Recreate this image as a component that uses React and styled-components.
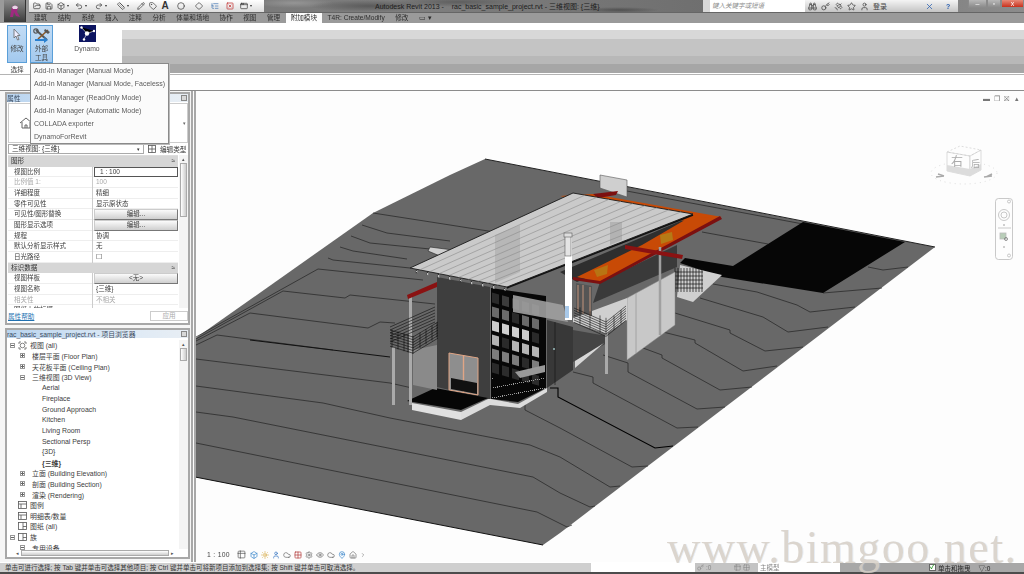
import React from "react";
import styled, { createGlobalStyle } from "styled-components";
import {
  FolderOpen, Save, Box, Undo2, Redo2, Ruler, Pencil, Tag, Circle, Diamond, ListTree, SquareX, AppWindow,
  Binoculars, Key, Satellite, Star, User, X as XIcon, Table2, Sun, Eye, Cloud, Grid2x2, House, MapPin, Settings, ChevronRight,
} from "lucide-react";

const FONT = `"Liberation Sans", "Noto Sans CJK SC", sans-serif`;

const GlobalStyle = createGlobalStyle`
  html, body { margin: 0; padding: 0; background: #fff; overflow: hidden; }
  #root { width: 1024px; height: 574px; }
  * { box-sizing: border-box; }
`;

const Page = styled.div`
  position: relative;
  width: 1024px;
  height: 574px;
  display: flex;
  flex-direction: column;
  overflow: hidden;
  font-family: ${FONT};
  font-size: 7px;
  color: #333;
  filter: blur(0.35px);
`;

/* ---------- title bar + tabs ---------- */
const Header = styled.header`
  display: grid;
  grid-template-columns: 29px 1fr;
  grid-template-rows: 13px 10px;
  background: #9a9a9a;
`;
const AppButton = styled.div`
  grid-row: 1 / 3;
  margin: 0 3px 1px 4px;
  background: linear-gradient(180deg, #8a8a8a, #3c3c3c);
  border-right: 1px solid #333;
  display: flex;
  align-items: center;
  justify-content: center;
`;
const TitleBar = styled.div`
  display: flex;
  align-items: center;
  height: 13px;
  background:
    radial-gradient(ellipse 60px 6px at 340px 6px, #5a5a5a, transparent),
    radial-gradient(ellipse 40px 5px at 265px 3px, #959595, transparent),
    radial-gradient(ellipse 40px 3px at 590px 10px, #505050, transparent),
    radial-gradient(ellipse 70px 5px at 430px 2px, #5e5e5e, transparent),
    linear-gradient(90deg, #747474, #7e7e7e 40%, #6e6e6e 70%, #8c8c8c);
  border-bottom: 1px solid #666;
`;
const Qat = styled.div`
  width: 235px;
  height: 12px;
  margin-top: -1px;
  background: linear-gradient(180deg, #fff, #dcdcdc);
  display: flex;
  align-items: center;
  color: #333;
  padding-left: 2px;
`;
const QatSlot = styled.span`
  width: ${(p) => p.$w}px;
  display: flex;
  align-items: center;
  justify-content: center;
  font-weight: bold;
  font-size: ${(p) => (p.$big ? 10 : 7)}px;
  ${(p) => p.$caret && `
    &::after {
      content: "";
      margin-left: 2px;
      border: 1.5px solid transparent;
      border-top: 2px solid #333;
      border-bottom: 0;
    }
  `}
`;
const WindowTitle = styled.div`
  margin-left: 111px;
  width: 328px;
  font-size: 7px;
  color: #1c1c1c;
  white-space: pre;
`;
const Search = styled.div`
  width: 102px;
  height: 12px;
  background: #fff;
  border-left: 7px solid #d8d8d8;
  padding-left: 2px;
  font-size: 6.5px;
  font-style: italic;
  color: #8a8a8a;
  line-height: 12px;
`;
const HelpTools = styled.div`
  width: 153px;
  height: 12px;
  background: linear-gradient(180deg, #f4f4f4, #c4c4c4);
  display: flex;
  align-items: center;
  gap: 4px;
  padding-left: 3px;
  color: #444;
  font-size: 7px;
`;
const WinButtons = styled.div`
  flex: 1;
  display: flex;
  justify-content: flex-end;
  align-items: flex-start;
  height: 13px;
`;
const WinButton = styled.span`
  width: ${(p) => p.$w}px;
  height: 8px;
  display: flex;
  justify-content: center;
  align-items: center;
  color: #fff;
  font-size: 7px;
  border: 1px solid #8a8a8a;
  border-top: 0;
  background: ${(p) => (p.$close ? "linear-gradient(180deg,#e88a78,#c8301c)" : "linear-gradient(180deg,#b8b8b8,#8c8c8c)")};
`;
const TabBar = styled.nav`
  display: flex;
  align-items: center;
  gap: 10.5px;
  height: 10px;
  padding-left: 5px;
  background: #9a9a9a;
`;
const Tab = styled.span`
  font-size: 6.6px;
  line-height: 10px;
  color: #2c2c2c;
  white-space: nowrap;
  ${(p) => p.$active && `
    background: #fdfdfd;
    margin: 0 -5px;
    padding: 0 5px;
    height: 10px;
  `}
`;

/* ---------- ribbon ---------- */
const Ribbon = styled.section`
  display: flex;
  height: 51px;
  background: #fff;
`;
const RibbonTools = styled.div`
  width: 122px;
  padding: 2px 0 0 7px;
  display: grid;
  grid-template-columns: 20px 23px 1fr;
  column-gap: 3px;
  grid-template-rows: 38px 1fr;
`;
const RibbonButton = styled.div`
  background: linear-gradient(180deg, #c2dcf5, #a3c9ee);
  border: 1px solid #5a9fd8;
  display: flex;
  flex-direction: column;
  align-items: center;
  text-align: center;
  padding-top: 2px;
  font-size: 6.6px;
  line-height: 8.5px;
  color: #444;
`;
const DynamoButton = styled.div`
  display: flex;
  flex-direction: column;
  align-items: center;
  gap: 3px;
  padding-left: 2px;
  color: #555;
  font-size: 6.8px;
  width: 60px;
`;
const GroupLabel = styled.div`
  grid-column: 1 / 2;
  text-align: center;
  font-size: 6.6px;
  padding-top: 1px;
  color: #444;
`;
const RibbonBands = styled.div`
  flex: 1;
  background: linear-gradient(
    180deg,
    #fff 0 7px,
    #d8d8d8 7px 16px,
    #c4c4c4 16px 33px,
    #b8b8b8 33px 41px,
    #a6a6a6 41px 50px,
    #fff 50px
  );
`;
const OptionsBar = styled.div`
  height: 17px;
  background: #fff;
  border-top: 1px solid #b4b4b4;
  border-bottom: 1px solid #8c8c8c;
`;

/* ---------- add-in menu ---------- */
const Menu = styled.ul`
  position: absolute;
  left: 30px;
  top: 63px;
  width: 139px;
  height: 81px;
  margin: 0;
  padding: 0 0 0 3px;
  list-style: none;
  background: #fbfbfb;
  border: 1px solid #8a8a8a;
  box-shadow: 1px 1px 0 #bbb;
  z-index: 5;
`;
const MenuItem = styled.li`
  height: 13.3px;
  line-height: 13.3px;
  font-size: 7px;
  color: #5c5c5c;
  white-space: nowrap;
`;

/* ---------- body ---------- */
const Main = styled.main`
  flex: 1;
  display: flex;
  min-height: 0;
`;
const Sidebar = styled.aside`
  width: 191px;
  padding: 1px 1px 0 5px;
  display: flex;
  flex-direction: column;
  gap: 3px;
  background: #f6f6f6;
`;
const Panel = styled.div`
  height: ${(p) => p.$h}px;
  background: #fff;
  border: 2px solid #a8a8a8;
  display: flex;
  flex-direction: column;
  overflow: hidden;
`;
const PanelHead = styled.div`
  height: 8px;
  flex: none;
  display: flex;
  align-items: center;
  justify-content: space-between;
  padding: 0 1px 0 0;
  background: linear-gradient(90deg, #b9d4ef, #dce9f6 60%, #e8eef4);
  font-size: 6.8px;
  color: #3c4c60;
  white-space: nowrap;
`;
const PanelClose = styled.span`
  width: 6px;
  height: 6px;
  border: 1px solid #888;
  background: #d8d8d8;
`;
const TypeArea = styled.div`
  height: 40px;
  flex: none;
  margin: 1px 0 0 1px;
  border: 1px solid #ccc;
  display: flex;
  align-items: center;
  padding-left: 10px;
  justify-content: space-between;
  color: #666;
`;
const TypeRow = styled.div`
  height: 12px;
  flex: none;
  display: flex;
  align-items: center;
  padding-left: 1px;
  gap: 4px;
  font-size: 6.6px;
`;
const TypeSelect = styled.div`
  width: 136px;
  height: 10px;
  padding: 0 3px;
  border: 1px solid #aaa;
  display: flex;
  justify-content: space-between;
  align-items: center;
  line-height: 8px;
`;
const EditType = styled.span`
  display: flex;
  align-items: center;
  gap: 4px;
`;
const TableWrap = styled.div`
  flex: 1;
  min-height: 0;
  display: flex;
  overflow: hidden;
`;
const PropTable = styled.div`
  width: 173px;
  margin-left: 1px;
  border-top: 1px solid #ddd;
`;
const SectionRow = styled.div`
  height: 10.67px;
  line-height: 10.67px;
  background: #d6d6d6;
  padding: 0 3px;
  font-size: 6.6px;
  display: flex;
  justify-content: space-between;
`;
const PropRow = styled.div`
  height: 10.67px;
  display: grid;
  grid-template-columns: 85px 1fr;
  font-size: 6.5px;
  line-height: 10.67px;
  color: ${(p) => (p.$muted ? "#a8a8a8" : "#3c3c3c")};
  border-bottom: 1px solid #eee;
`;
const PropLabel = styled.span`
  padding-left: 6px;
  border-right: 1px solid #ccc;
  white-space: nowrap;
`;
const PropValue = styled.span`
  padding-left: 3px;
  white-space: nowrap;
  ${(p) => p.$input && `
    margin: 0 0 0 1px;
    border: 1px solid #555;
    padding-left: 5px;
    line-height: 8.5px;
  `}
  ${(p) => p.$button && `
    margin: 0 0 0 1px;
    padding: 0;
    text-align: center;
    line-height: 8.5px;
    border: 1px solid #777;
    border-left-color: #ccc;
    border-top-color: #ccc;
    background: linear-gradient(180deg, #fbfbfb, #cfcfcf);
  `}
`;
const ScrollV = styled.div`
  width: 9px;
  margin-left: 1px;
  background: #f4f4f4;
  display: flex;
  flex-direction: column;
  align-items: center;
  color: #555;
  font-size: 5px;
  line-height: 8px;
`;
const ScrollThumb = styled.div`
  width: 7px;
  height: ${(p) => p.$h}px;
  border: 1px solid #aaa;
  background: linear-gradient(90deg, #fff, #ccc);
`;
const PanelFoot = styled.div`
  height: 15px;
  flex: none;
  display: flex;
  justify-content: space-between;
  align-items: center;
  padding: 0 0 0 1px;
  background: #fff;
`;
const HelpLink = styled.a`
  color: #2070b0;
  text-decoration: underline;
  font-size: 6.6px;
`;
const ApplyButton = styled.span`
  width: 38px;
  height: 10px;
  border: 1px solid #ccc;
  color: #aaa;
  text-align: center;
  line-height: 8px;
  font-size: 6.6px;
`;
const TreeWrap = styled.div`
  flex: 1;
  min-height: 0;
  display: flex;
  padding-top: 2px;
`;
const Tree = styled.div`
  width: 173px;
`;
const TreeRowBox = styled.div`
  height: 10.67px;
  display: flex;
  align-items: center;
  gap: ${(p) => p.$gap}px;
  padding-left: ${(p) => p.$indent}px;
  font-size: 6.9px;
  color: #3c3c3c;
  white-space: nowrap;
`;
const Expander = styled.span`
  width: 5px;
  height: 5px;
  flex: none;
  border: 1px solid #999;
  background:
    linear-gradient(#666, #666) center / 3px 1px no-repeat,
    ${(p) => (p.$open ? "none" : "linear-gradient(#666, #666) center / 1px 3px no-repeat")};
`;
const HScroll = styled.div`
  height: 8px;
  margin: 0 0 0 9px;
  display: flex;
  align-items: center;
  gap: 2px;
  font-size: 5px;
  color: #555;
`;
const HThumb = styled.div`
  width: 148px;
  height: 6px;
  border: 1px solid #aaa;
  background: linear-gradient(180deg, #fff, #ccc);
`;

/* ---------- viewport ---------- */
const Viewport = styled.div`
  position: relative;
  flex: 1;
  border-left: 5px double #a8a8a8;
  background: #fdfdfd;
  overflow: hidden;
`;
const Model = styled.svg`
  position: absolute;
  left: 0;
  top: 0;
`;
const ViewButtons = styled.div`
  position: absolute;
  top: 4px;
  right: 5px;
  display: flex;
  gap: 4px;
  color: #777;
  font-size: 7px;
  line-height: 7px;
`;
const ViewBar = styled.div`
  position: absolute;
  left: 11px;
  bottom: 3px;
  display: flex;
  align-items: center;
  font-size: 6.8px;
  color: #444;
  letter-spacing: 0.3px;
`;
const ViewBarScale = styled.span`
  width: 30px;
`;
const ViewBarIcon = styled.span`
  width: ${(p) => p.$w || 11}px;
  display: flex;
  color: ${(p) => p.$c || "#666"};
`;
const ViewCube = styled.svg`
  position: absolute;
  right: 22px;
  top: 44px;
`;
const NavBar = styled.svg`
  position: absolute;
  right: 11px;
  top: 107px;
`;

/* ---------- status bar ---------- */
const StatusBar = styled.footer`
  height: 12px;
  flex: none;
  display: flex;
  align-items: flex-start;
  padding-top: 1px;
  background: linear-gradient(180deg, #fff 0 1px, #cfcfcf 1px 10px, #4c4c4c 10px);
  font-size: 6.5px;
  color: #333;
`;
const StatusText = styled.div`
  width: 591px;
  padding-left: 5px;
  white-space: nowrap;
  line-height: 9px;
`;
const StatusBox = styled.div`
  width: ${(p) => p.$w}px;
  height: 9px;
  line-height: 9px;
  background: ${(p) => p.$bg || "#fff"};
  color: #888;
  display: flex;
  align-items: center;
  gap: 2px;
  padding-left: 2px;
  flex: none;
`;
const StatusTail = styled.div`
  flex: 1;
  height: 9px;
  background: #a8a8a8;
  display: flex;
  align-items: center;
  gap: 2px;
  padding-left: 89px;
  color: #222;
`;
const Tick = styled.span`
  width: 7px;
  height: 7px;
  border: 1px solid #666;
  background: #fff;
  color: #2b9a2b;
  font-size: 6px;
  line-height: 5px;
  font-weight: bold;
`;

const Watermark = styled.div`
  position: absolute;
  left: 667px;
  top: 525px;
  font-family: "Liberation Serif", "DejaVu Serif", serif;
  font-size: 46px;
  letter-spacing: 1.5px;
  line-height: 46px;
  color: #d6cfc6;
  opacity: 0.85;
  white-space: nowrap;
  text-shadow: 1px 0 0 rgba(180, 200, 225, 0.35);
  z-index: 6;
`;

/* ---------- data ---------- */
const TABS = ["建筑", "结构", "系统", "插入", "注释", "分析", "体量和场地", "协作", "视图", "管理"];
const MENU = [
  "Add-In Manager (Manual Mode)",
  "Add-In Manager (Manual Mode, Faceless)",
  "Add-In Manager (ReadOnly Mode)",
  "Add-In Manager (Automatic Mode)",
  "COLLADA exporter",
  "DynamoForRevit",
];
const PROPS = [
  { section: "图形" },
  { label: "视图比例", value: "1 : 100", input: true },
  { label: "比例值 1:", value: "100", muted: true },
  { label: "详细程度", value: "精细" },
  { label: "零件可见性", value: "显示原状态" },
  { label: "可见性/图形替换", value: "编辑...", button: true },
  { label: "图形显示选项", value: "编辑...", button: true },
  { label: "规程", value: "协调" },
  { label: "默认分析显示样式", value: "无" },
  { label: "日光路径", value: "☐" },
  { section: "标识数据" },
  { label: "视图样板", value: "<无>", button: true },
  { label: "视图名称", value: "{三维}" },
  { label: "相关性", value: "不相关", muted: true },
  { label: "图纸上的标题", value: "" },
];
const TREE = [
  { text: "视图 (all)", indent: 3, gap: 3, open: true, icon: "view" },
  { text: "楼层平面 (Floor Plan)", indent: 13, gap: 7, closed: true },
  { text: "天花板平面 (Ceiling Plan)", indent: 13, gap: 7, closed: true },
  { text: "三维视图 (3D View)", indent: 13, gap: 7, open: true },
  { text: "Aerial", indent: 35 },
  { text: "Fireplace", indent: 35 },
  { text: "Ground Approach", indent: 35 },
  { text: "Kitchen", indent: 35 },
  { text: "Living Room", indent: 35 },
  { text: "Sectional Persp", indent: 35 },
  { text: "{3D}", indent: 35 },
  { text: "{三维}", indent: 35, bold: true },
  { text: "立面 (Building Elevation)", indent: 13, gap: 7, closed: true },
  { text: "剖面 (Building Section)", indent: 13, gap: 7, closed: true },
  { text: "渲染 (Rendering)", indent: 13, gap: 7, closed: true },
  { text: "图例", indent: 11, gap: 3, icon: "table" },
  { text: "明细表/数量", indent: 11, gap: 3, icon: "table" },
  { text: "图纸 (all)", indent: 11, gap: 3, icon: "sheet" },
  { text: "族", indent: 3, gap: 3, open: true, icon: "sheet" },
  { text: "专用设备", indent: 13, gap: 7, open: true },
];

/* terrain contours, in page pixels */
const CONTOURS = [
  "373,213 450,225 520,236",
  "362,225 387,233 450,241",
  "351,236 370,243 430,249",
  "340,247 353,251 407,259",
  "328,258 333,260 410,268",
  "196,337 318,269 423,280",
  "196,339 283,291 345,298 350,295 435,304",
  "196,341 250,313 368,328 380,322 395,323",
  "196,345 217,335 333,350",
  "196,359 390,383 412,388",
  "196,386 323,403 390,418 530,445 560,457 610,487 620,486",
  "196,412 233,417 533,477 560,493 590,507 595,506",
  "196,443 537,512 567,527 572,525",
  "525,403 525,410 560,428 632,467 648,466",
  "573,372 593,377 593,383 677,428 698,427",
  "603,355 628,363 628,372 697,409 725,407",
  "643,348 662,355 662,358 720,390 752,387",
  "663,332 695,340 695,343 743,371 777,366",
  "675,313 730,330 730,333 765,351 803,347",
  "700,298 763,317 788,332 828,327",
  "713,284 757,292 797,305 810,312 855,307",
  "823,293 882,288",
  "868,267 883,270 908,267",
  "702,232 768,244",
];

const lerp = (a, b, t) => a + (b - a) * t;
const ROOF_LINES = Array.from({ length: 9 }, (_, i) => {
  const t = (i + 1) / 10;
  return [lerp(410, 507, t), lerp(268, 287, t), lerp(573, 693, t), lerp(193, 214, t)];
});
const ROOF_TEETH = [0, 1, 2, 3, 4, 5, 6, 7, 8].map((i) => [lerp(416, 504, i / 8), lerp(270, 288, i / 8)]);
const WINDOW_COLS = [492, 502, 512, 522, 532];
const WINDOW_ROWS = [0, 1, 2, 3, 4, 5];
const PANE_TONES = ["#3c3c3c", "#6a6a6a", "#cfcfcf", "#b4b4b4", "#7c7c7c", "#2c2c2c"];
const RAILS = [0, 1, 2, 3, 4, 5, 6];
const SPECKLE = Array.from({ length: 60 }, (_, i) => [492 + ((i * 37) % 53), 378 + ((i * 23) % 20)]);

const TreeIcon = ({ type }) => {
  if (type === "view") {
    return (
      <svg width="9" height="9" viewBox="0 0 9 9" fill="none" stroke="#666" strokeWidth="0.8">
        <circle cx="4.5" cy="4.5" r="2.3" />
        <path d="M1 3V1h2M6 1h2v2M8 6v2H6M3 8H1V6" />
      </svg>
    );
  }
  return (
    <svg width="9" height="8" viewBox="0 0 9 8" fill="none" stroke="#555" strokeWidth="0.8">
      <rect x="0.5" y="0.5" width="8" height="7" />
      {type === "table" ? <path d="M.5 3h8M3 3v4" /> : <path d="M5 .5v7M5 4.5h3.5" />}
    </svg>
  );
};

const TreeRow = ({ row }) => (
  <TreeRowBox $indent={row.indent} $gap={row.gap || 0} style={row.bold ? { fontWeight: "bold" } : undefined}>
    {(row.open || row.closed) && <Expander $open={row.open} />}
    {row.icon && <TreeIcon type={row.icon} />}
    <span>{row.text}</span>
  </TreeRowBox>
);

const TerrainModel = () => (
  <Model width="828" height="471" viewBox="196 91 828 471">
    {/* ground */}
    <polygon points="190,342 373,213 450,175 485,159 935,247 560,533 543,545 190,476" fill="#686868" />
    <line x1="190" y1="476" x2="543" y2="545" stroke="#111" strokeWidth="1" />
    <polyline points="485,159 660,193 935,247" fill="none" stroke="#222" strokeWidth="1" />
    <polyline points="600,186 803,224" fill="none" stroke="#222" strokeWidth="0.7" />
    {CONTOURS.map((pts) => (
      <polyline key={pts} points={pts} fill="none" stroke="#222" strokeWidth="0.7" />
    ))}
    <polyline points="550,388 558,388 558,397 655,448 673,446" fill="none" stroke="#000" strokeWidth="1.1" />
    <polyline points="250,340 390,357" fill="none" stroke="#111" strokeWidth="1" />
    {/* shadow */}
    <polygon points="803,222 905,242 823,293 722,277 680,263 685,258 733,266" fill="#060606" />

    {/* back wall */}
    <polygon points="600,175 627,180 627,197 600,188" fill="#cfcfcf" stroke="#555" strokeWidth="0.6" />

    {/* rear terrace */}
    <polygon points="680,265 722,275 693,302 677,297" fill="#cfcfcf" />
    <g stroke="#111" strokeWidth="0.7">
      {[675, 678, 681, 684, 687, 690, 693, 696, 699, 702].map((x) => (
        <line key={x} x1={x} y1="268" x2={x} y2="292" />
      ))}
      {[0, 1, 2, 3, 4].map((i) => (
        <line key={i} x1="675" y1={272 + i * 4} x2="703" y2={272 + i * 4} />
      ))}
    </g>

    {/* upper wall under the roof */}
    <polygon points="560,272 690,217 650,250 577,282" fill="#2e2e2e" />
    <polygon points="600,282 677,245 677,267 593,303" fill="#3a3a3a" />

    {/* orange overhang */}
    <polygon points="593,194 722,217 690,222 560,196" fill="#c84a06" />
    <polygon points="577,277 642,245 690,217 720,218 600,282" fill="#c84a06" />
    <polygon points="660,235 672,232 673,240 661,244" fill="#b0861a" opacity="0.8" />
    <polygon points="594,270 608,265 607,274 597,277" fill="#b0861a" opacity="0.7" />
    <polygon points="720,216 722,219 600,284 573,280 573,277 600,281" fill="#7c1010" />
    <polygon points="593,194 618,191 616,195 598,198" fill="#7c1010" />

    {/* garage */}
    <polygon points="627,298 675,272 675,325 627,360" fill="#c8c8c8" stroke="#888" strokeWidth="0.5" />
    <line x1="636" y1="293" x2="636" y2="353" stroke="#999" strokeWidth="0.8" />
    <line x1="660" y1="247" x2="660" y2="335" stroke="#a0a0a0" strokeWidth="2.5" />
    <polygon points="625,245 683,255 682,259 625,249" fill="#8a1212" />

    {/* side wall below deck */}
    <polygon points="547,320 573,327 573,370 547,388" fill="#383838" />
    <polygon points="573,330 607,336 607,343 573,362" fill="#444" />
    <polygon points="575,361 604,343 575,368" fill="#d8d8d8" />
    <line x1="555" y1="322" x2="555" y2="385" stroke="#111" strokeWidth="0.6" />
    <circle cx="554" cy="349" r="1" fill="#9bb" />
    <rect x="605" y="333" width="3" height="41" fill="#aaa" />

    {/* deck */}
    <polygon points="573,318 627,298 627,320 606,334 573,322" fill="#cfcfcf" />
    <polygon points="576,283 592,286 592,316 576,312" fill="#555" />
    <g stroke="#e0a585" strokeWidth="0.8">
      <line x1="578" y1="285" x2="578" y2="312" />
      <line x1="583" y1="285" x2="583" y2="314" />
      <line x1="590" y1="287" x2="590" y2="316" />
    </g>
    <g stroke="#111" strokeWidth="0.6" fill="none">
      {RAILS.map((i) => (
        <polyline key={i} points={`574,${308 + i * 2.4} 606,${322 + i * 2.4} 626,${306 + i * 2.4}`} />
      ))}
      {[580, 590, 600, 606, 614, 621].map((x) => (
        <line key={x} x1={x} y1={x < 607 ? 305 + (x - 574) * 0.4 : 322 - (x - 606) * 0.8} x2={x} y2={x < 607 ? 322 + (x - 574) * 0.4 : 336 - (x - 606) * 0.8} />
      ))}
    </g>

    {/* main wall and window grid */}
    <polygon points="437,277 490,287 490,400 437,387" fill="#3e3e3e" />
    <polygon points="491,288 546,296 546,388 518,402 491,399" fill="#070707" />
    {WINDOW_COLS.map((x, c) =>
      WINDOW_ROWS.map((r) => {
        const top = 292 + r * 14 + (x - 490) * 0.28;
        return (
          <polygon
            key={`${c}-${r}`}
            points={`${x},${top} ${x + 7},${top + 2} ${x + 7},${top + 12} ${x},${top + 10}`}
            fill={(c * 2 + r) % 5 === 0 ? "#2a2a2a" : PANE_TONES[r]}
          />
        );
      })
    )}
    {SPECKLE.map(([x, y]) => (
      <rect key={`${x}-${y}`} x={x} y={y} width="1" height="1" fill="#999" />
    ))}
    <polygon points="513,295 563,305 568,322 513,312" fill="#a0a0a0" opacity="0.9" />
    <polygon points="515,372 545,365 545,372 520,378" fill="#999" />

    {/* door */}
    <polygon points="449,353 478,358 478,395 449,390" fill="#8e8e8e" stroke="#e0a585" strokeWidth="1" />
    <line x1="463.5" y1="355" x2="463.5" y2="393" stroke="#e0a585" strokeWidth="1.4" />
    <polygon points="451,378 477,383 477,394 451,389" fill="#111" />

    {/* steps */}
    <polygon points="412,403 461,412 461,420 412,410" fill="#e0e0e0" />
    <polygon points="461,412 488,399 491,399 518,404 547,388 547,392 520,408 490,405 461,420" fill="#dcdcdc" />
    <polygon points="407,401 435,388 488,398 461,410" fill="#060606" />

    {/* left balcony */}
    <polygon points="413,350 437,345 437,390 413,385" fill="#8a8a8a" />
    <rect x="409" y="297" width="3" height="108" fill="#aaa" />
    <rect x="392" y="347" width="3" height="58" fill="#aaa" />
    <g stroke="#0c0c0c" strokeWidth="0.6" fill="none">
      {[0, 1, 2, 3, 4, 5].map((i) => (
        <line key={i} x1="390" y1={327 + i * 3} x2="435" y2={307 + i * 3} />
      ))}
      {RAILS.map((i) => (
        <polyline key={i} points={`390,${330 + i * 2.7} 413,${337 + i * 2.7} 438,${322 + i * 2.7}`} />
      ))}
      {[392, 398, 404, 408, 413, 420, 426, 432, 437].map((x) => (
        <line key={x} x1={x} y1={x < 414 ? 329 + (x - 390) * 0.3 : 337 - (x - 413) * 0.6} x2={x} y2={x < 414 ? 347 + (x - 390) * 0.3 : 352 - (x - 413) * 0.6} />
      ))}
    </g>
    <polygon points="407,295 437,282 437,287 408,299" fill="#8a1212" />

    {/* roof */}
    <polygon points="430,247 453,250 440,256 428,251" fill="#cfcfcf" stroke="#222" strokeWidth="0.6" />
    <polygon points="573,193 693,214 507,287 410,268" fill="#cacaca" stroke="#1a1a1a" strokeWidth="0.9" />
    {ROOF_LINES.map(([x1, y1, x2, y2]) => (
      <line key={x1} x1={x1} y1={y1} x2={x2} y2={y2} stroke="#8c8c8c" strokeWidth="0.6" />
    ))}
    <polygon points="495,235 520,225 520,272 495,283" fill="#8a8a8a" opacity="0.3" />
    <polygon points="610,222 622,222 622,240 610,245" fill="#8a8a8a" opacity="0.35" />
    <polyline points="507,288 693,215" fill="none" stroke="#111" strokeWidth="1.4" />
    {ROOF_TEETH.map(([x, y]) => (
      <rect key={x} x={x} y={y} width="1.5" height="3" fill="#ddd" stroke="#222" strokeWidth="0.3" />
    ))}

    {/* chimney */}
    <rect x="565" y="236" width="7" height="84" fill="#fff" />
    <rect x="565" y="306" width="4" height="12" fill="#a8c8e8" />
    <rect x="565" y="236" width="6" height="20" fill="#e4e4e4" stroke="#444" strokeWidth="0.5" />
    <rect x="564" y="233" width="8" height="4" fill="#ddd" stroke="#444" strokeWidth="0.5" />
  </Model>
);

export default function App() {
  return (
    <Page>
      <GlobalStyle />
      <Header>
        <AppButton>
          <svg width="14" height="16" viewBox="0 0 14 16">
            <path d="M2 14 L4 4 Q7 1 10 4 L9 9 L12 14 L8 13 L6 9 L5 14Z" fill="#a02a80" />
            <path d="M4 4 Q7 1 10 4 L9 6 L5 6Z" fill="#e8d8e8" />
          </svg>
        </AppButton>
        <TitleBar>
          <Qat>
            <QatSlot $w={12}><FolderOpen size={8} /></QatSlot>
            <QatSlot $w={12}><Save size={8} /></QatSlot>
            <QatSlot $w={16} $caret><Box size={8} /></QatSlot>
            <QatSlot $w={20} $caret><Undo2 size={8} /></QatSlot>
            <QatSlot $w={20} $caret><Redo2 size={8} /></QatSlot>
            <QatSlot $w={24} $caret><Ruler size={8} /></QatSlot>
            <QatSlot $w={12}><Pencil size={8} /></QatSlot>
            <QatSlot $w={12}><Tag size={8} /></QatSlot>
            <QatSlot $w={12} $big>A</QatSlot>
            <QatSlot $w={20}><Circle size={8} /></QatSlot>
            <QatSlot $w={16}><Diamond size={8} /></QatSlot>
            <QatSlot $w={15}><ListTree size={8} color="#3a70b0" /></QatSlot>
            <QatSlot $w={16}><SquareX size={8} color="#c02020" /></QatSlot>
            <QatSlot $w={16} $caret><AppWindow size={8} /></QatSlot>
          </Qat>
          <WindowTitle>{"Autodesk Revit 2013 -    rac_basic_sample_project.rvt - 三维视图: {三维}"}</WindowTitle>
          <Search>键入关键字或短语</Search>
          <HelpTools>
            <Binoculars size={9} />
            <Key size={9} />
            <Satellite size={9} />
            <Star size={9} />
            <User size={9} />
            <span style={{ width: 48 }}>登录</span>
            <XIcon size={9} color="#2a5fb0" />
            <span style={{ color: "#2a5fb0", fontWeight: "bold", marginLeft: 8 }}>?</span>
          </HelpTools>
          <WinButtons>
            <WinButton $w={19}>–</WinButton>
            <WinButton $w={14}>▫</WinButton>
            <WinButton $w={23} $close>x</WinButton>
          </WinButtons>
        </TitleBar>
        <TabBar>
          {TABS.map((t) => (
            <Tab key={t}>{t}</Tab>
          ))}
          <Tab $active>附加模块</Tab>
          <Tab>T4R: Create/Modify</Tab>
          <Tab>修改</Tab>
          <Tab>▭ ▾</Tab>
        </TabBar>
      </Header>

      <Ribbon>
        <RibbonTools>
          <RibbonButton>
            <svg width="10" height="14" viewBox="0 0 10 14">
              <path d="M2 1 L2 10 L4 8 L5.5 12 L7 11.5 L5.5 7.5 L8 7.5Z" fill="#eef" stroke="#666" strokeWidth="0.8" />
            </svg>
            <span style={{ marginTop: 3 }}>修改</span>
          </RibbonButton>
          <RibbonButton>
            <svg width="18" height="15" viewBox="0 0 18 15">
              <path d="M3 2 L14 12" stroke="#555" strokeWidth="2" />
              <path d="M15 2 L5 11" stroke="#8a5a2a" strokeWidth="1.6" />
              <path d="M12 1 L17 4 L15 6 L11 3Z" fill="#555" />
              <circle cx="3" cy="3" r="2.2" fill="none" stroke="#555" strokeWidth="1.2" />
              <path d="M2 11h9v-2l4 3-4 3v-2H2z" fill="#2a80d0" />
            </svg>
            <span style={{ marginTop: 2 }}>外部<br />工具</span>
          </RibbonButton>
          <DynamoButton>
            <svg width="17" height="17" viewBox="0 0 17 17">
              <rect width="17" height="17" fill="#0c1460" />
              <path d="M2 2 L8 8.500 L15 6 M8 8.500 L5 14" stroke="#fff" strokeWidth="0.6" />
              <circle cx="8" cy="8.500" r="2.200" fill="#fff" />
              <circle cx="2.500" cy="2.500" r="1.200" fill="#fff" />
              <circle cx="15" cy="6" r="1.200" fill="#fff" />
              <circle cx="5" cy="14.500" r="1.200" fill="#fff" />
            </svg>
            <span>Dynamo</span>
          </DynamoButton>
          <GroupLabel>选择</GroupLabel>
        </RibbonTools>
        <RibbonBands />
      </Ribbon>
      <OptionsBar />

      <Main>
        <Sidebar>
          <Panel $h={233}>
            <PanelHead>
              <span>属性</span>
              <PanelClose />
            </PanelHead>
            <TypeArea>
              <svg width="14" height="14" viewBox="0 0 14 14" fill="none" stroke="#666" strokeWidth="1">
                <path d="M1 7 L7 2 L13 7 M3 6 V12 H11 V6 M6 12 V9 H8 V12" />
              </svg>
              <span style={{ fontSize: 5, marginRight: 1 }}>▾</span>
            </TypeArea>
            <TypeRow>
              <TypeSelect>
                <span>三维视图: {"{三维}"}</span>
                <span style={{ fontSize: 5 }}>▾</span>
              </TypeSelect>
              <EditType>
                <svg width="8" height="8" viewBox="0 0 8 8" fill="none" stroke="#555" strokeWidth="0.8">
                  <rect x="0.5" y="0.5" width="7" height="7" />
                  <path d="M.5 4h7M4 .5v7" />
                </svg>
                编辑类型
              </EditType>
            </TypeRow>
            <TableWrap>
              <PropTable>
                {PROPS.map((p) =>
                  p.section ? (
                    <SectionRow key={p.section}>
                      <span>{p.section}</span>
                      <span>≈</span>
                    </SectionRow>
                  ) : (
                    <PropRow key={p.label} $muted={p.muted}>
                      <PropLabel>{p.label}</PropLabel>
                      <PropValue $input={p.input} $button={p.button}>{p.value}</PropValue>
                    </PropRow>
                  )
                )}
              </PropTable>
              <ScrollV>
                <span>▴</span>
                <ScrollThumb $h={54} />
              </ScrollV>
            </TableWrap>
            <PanelFoot>
              <HelpLink>属性帮助</HelpLink>
              <ApplyButton>应用</ApplyButton>
            </PanelFoot>
          </Panel>

          <Panel $h={231}>
            <PanelHead>
              <span>rac_basic_sample_project.rvt - 项目浏览器</span>
              <PanelClose />
            </PanelHead>
            <TreeWrap>
              <Tree>
                {TREE.map((row) => (
                  <TreeRow key={row.text} row={row} />
                ))}
              </Tree>
              <ScrollV>
                <span>▴</span>
                <ScrollThumb $h={13} />
              </ScrollV>
            </TreeWrap>
            <HScroll>
              <span>◂</span>
              <HThumb />
              <span>▸</span>
            </HScroll>
          </Panel>
        </Sidebar>

        <Viewport>
          <TerrainModel />
          <ViewButtons>
            <span>▬</span>
            <span>❐</span>
            <span>⛝</span>
            <span style={{ marginLeft: 2 }}>▴</span>
          </ViewButtons>
          <ViewCube width="72" height="56" viewBox="0 0 72 56" fill="none" stroke="#c8c8c8" strokeWidth="0.6" fontFamily={FONT}>
            <ellipse cx="34" cy="38" rx="33" ry="11" strokeDasharray="1 4" />
            <path d="M6 42 l8 -1 M54 42 l8 -1 M8 39 l6 2 M56 42 l6 -3" stroke="#aaa" strokeWidth="1.4" />
            <polygon points="17,17 40,21 40,41 17,36" fill="#fdfdfd" />
            <polygon points="40,21 51,15 51,35 40,41" fill="#fdfdfd" />
            <polygon points="17,17 30,11 51,15 40,21" strokeDasharray="2 2" />
            <polygon points="17,30 40,34 51,29 51,35 40,41 17,36" fill="#dcdcdc" stroke="none" />
            <text x="21" y="31" fontSize="12" fill="#aaa" stroke="none">右</text>
            <text x="41" y="32" fontSize="9" fill="#aaa" stroke="none">后</text>
          </ViewCube>
          <NavBar width="18" height="62" viewBox="0 0 18 62" fill="none" stroke="#bbb" strokeWidth="0.8">
            <rect x="0.500" y="0.500" width="17" height="61" rx="3" fill="#fdfdfd" />
            <circle cx="14" cy="3.500" r="1.500" />
            <circle cx="14" cy="57.500" r="1.500" />
            <circle cx="9" cy="17" r="5.500" />
            <circle cx="9" cy="17" r="3" />
            <path d="M3 30 H16" />
            <rect x="5" y="35" width="6" height="6" fill="#b8cdb8" />
            <circle cx="11" cy="41" r="1.500" stroke="#777" />
            <path d="M8 27 h2 M8 49 h2" stroke="#888" />
          </NavBar>
          <ViewBar>
            <ViewBarScale>1 : 100</ViewBarScale>
            <ViewBarIcon $w={13}><Table2 size={9} /></ViewBarIcon>
            <ViewBarIcon $c="#2f80c8"><Box size={8} /></ViewBarIcon>
            <ViewBarIcon $c="#d0a030"><Sun size={8} /></ViewBarIcon>
            <ViewBarIcon $c="#2f70c0"><User size={8} /></ViewBarIcon>
            <ViewBarIcon><Cloud size={8} /></ViewBarIcon>
            <ViewBarIcon $c="#b03030"><Grid2x2 size={8} /></ViewBarIcon>
            <ViewBarIcon><Settings size={8} /></ViewBarIcon>
            <ViewBarIcon><Eye size={8} /></ViewBarIcon>
            <ViewBarIcon><Cloud size={8} /></ViewBarIcon>
            <ViewBarIcon $c="#2f80c8"><MapPin size={8} /></ViewBarIcon>
            <ViewBarIcon><House size={8} /></ViewBarIcon>
            <ViewBarIcon><ChevronRight size={6} /></ViewBarIcon>
          </ViewBar>
        </Viewport>
      </Main>

      <StatusBar>
        <StatusText>单击可进行选择; 按 Tab 键并单击可选择其他项目; 按 Ctrl 键并单击可将新项目添加到选择集; 按 Shift 键并单击可取消选择。</StatusText>
        <StatusBox $w={104} />
        <StatusBox $w={37} $bg="#c4c4c4">
          <Key size={7} /> :0
        </StatusBox>
        <StatusBox $w={26} $bg="#c4c4c4">
          <Table2 size={7} />
          <Grid2x2 size={7} />
        </StatusBox>
        <StatusBox $w={82}>主模型</StatusBox>
        <StatusTail>
          <Tick>✓</Tick>
          单击和拖曳
          <span style={{ marginLeft: 6 }}>▽:0</span>
        </StatusTail>
      </StatusBar>

      <Menu>
        {MENU.map((m) => (
          <MenuItem key={m}>{m}</MenuItem>
        ))}
      </Menu>
      <Watermark>www.bimgoo.net.</Watermark>
    </Page>
  );
}
